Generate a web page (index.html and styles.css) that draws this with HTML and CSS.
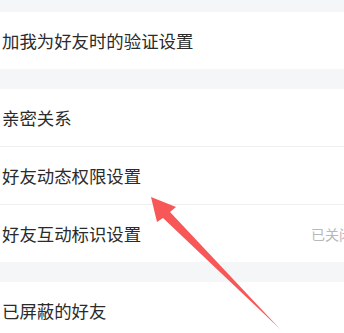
FILE: index.html
```html
<!DOCTYPE html>
<html lang="zh-CN">
<head>
<meta charset="utf-8">
<link rel="stylesheet" href="styles.css">
</head>
<body>
<div class="screen">
  <div class="gap gap-top"></div>
  <div class="group">
    <div class="row"><span class="label">加我为好友时的验证设置</span></div>
  </div>
  <div class="gap"></div>
  <div class="group">
    <div class="row"><span class="label">亲密关系</span></div>
    <div class="row"><span class="label">好友动态权限设置</span></div>
    <div class="row"><span class="label">好友互动标识设置</span><span class="status">已关闭</span></div>
  </div>
  <div class="gap"></div>
  <div class="group">
    <div class="row"><span class="label">已屏蔽的好友</span></div>
  </div>
</div>
<svg class="arrow" width="344" height="333" viewBox="0 0 344 333">
  <polygon points="151,197 176,207 170,212 280,329 163,218 157,222" fill="#f75757"/>
</svg>
</body>
</html>
```

FILE: styles.css
```css
html, body {
  margin: 0;
  padding: 0;
  background: #ffffff;
  overflow: hidden;
}
body {
  width: 344px;
  height: 333px;
  position: relative;
  font-family: "Noto Sans CJK SC", "Noto Sans", sans-serif;
}
.screen {
  width: 372px;
  display: flex;
  flex-direction: column;
}
.gap {
  height: 20px;
  background: #f5f6f8;
}
.gap-top {
  height: 12px;
}
.group {
  background: #ffffff;
  display: flex;
  flex-direction: column;
}
.row {
  height: 57px;
  display: flex;
  align-items: center;
  padding: 0 19px 0 2px;
  border-top: 1px solid #efeff1;
}
.row:first-child {
  border-top: none;
}
.label {
  font-size: 17.4px;
  color: #2b2b2b;
}
.status {
  margin-left: auto;
  font-size: 14px;
  color: #b8b8b8;
}
.arrow {
  position: absolute;
  left: 0;
  top: 0;
  pointer-events: none;
}
```
